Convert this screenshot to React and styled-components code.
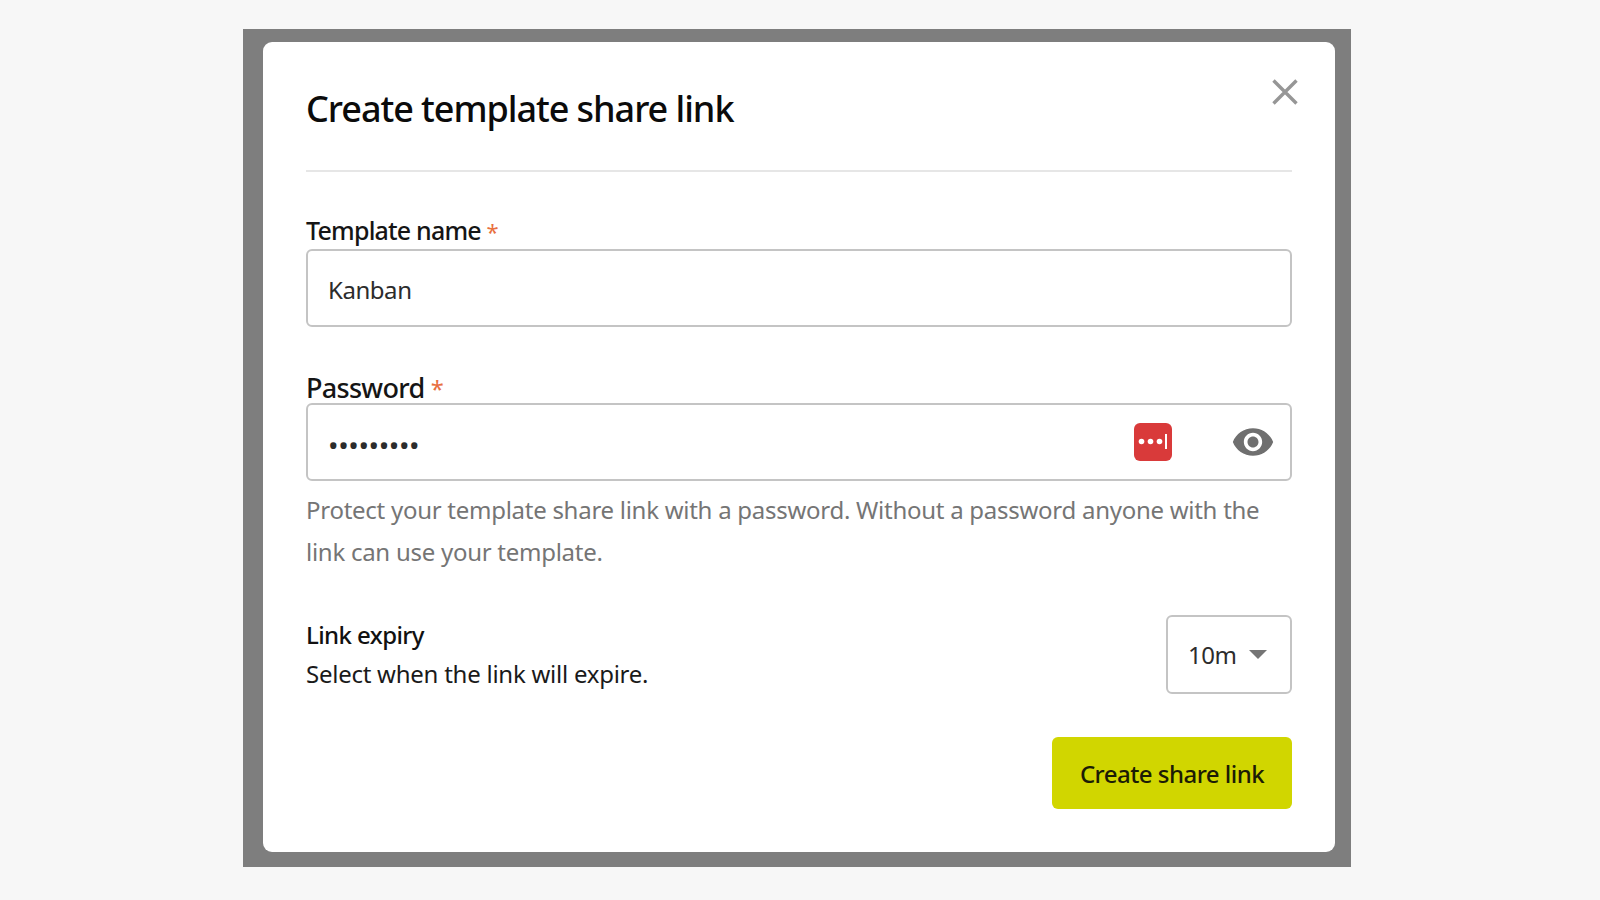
import React from "react";
import styled, { createGlobalStyle } from "styled-components";

const GlobalStyle = createGlobalStyle`
  html, body {
    margin: 0;
    padding: 0;
    background: #f7f7f7;
  }
  body {
    font-family: "Noto Sans", "Open Sans", "Liberation Sans", sans-serif;
  }
`;

const App = () => {
  return (
    <Page>
      <GlobalStyle />
      <Overlay>
        <Modal>
          <CloseButton aria-label="Close">
            <svg width="30" height="30" viewBox="0 0 30 30" fill="none">
              <path d="M3.5 3.5L26.5 26.5M26.5 3.5L3.5 26.5" stroke="#969696" strokeWidth="3.4" />
            </svg>
          </CloseButton>
          <Title>Create template share link</Title>
          <Divider />
          <Label>
            Template name <Required>*</Required>
          </Label>
          <Field>
            <Input defaultValue="Kanban" readOnly />
          </Field>
          <Label $large>
            Password <Required>*</Required>
          </Label>
          <Field>
            <Input type="password" defaultValue="password1" readOnly $dots />
            <LastPassIcon width="38" height="38" viewBox="0 0 38 38">
              <rect width="38" height="38" rx="6" fill="#d93a3a" />
              <circle cx="7.5" cy="18.5" r="2.8" fill="#fff" />
              <circle cx="16.5" cy="18.5" r="2.8" fill="#fff" />
              <circle cx="25.5" cy="18.5" r="2.8" fill="#fff" />
              <rect x="31" y="11" width="2" height="15" fill="#fff" />
            </LastPassIcon>
            <EyeIcon width="44" height="44" viewBox="0 0 24 24">
              <path
                fill="#6f6f6f"
                d="M12 4.5C7 4.5 2.73 7.61 1 12c1.73 4.39 6 7.5 11 7.5s9.27-3.11 11-7.5c-1.73-4.39-6-7.5-11-7.5zM12 17c-2.76 0-5-2.24-5-5s2.24-5 5-5 5 2.24 5 5-2.24 5-5 5zm0-8c-1.66 0-3 1.34-3 3s1.34 3 3 3 3-1.34 3-3-1.34-3-3-3z"
              />
            </EyeIcon>
          </Field>
          <HelpText>
            Protect your template share link with a password. Without a password anyone with the link can use your
            template.
          </HelpText>
          <ExpiryRow>
            <div>
              <ExpiryTitle>Link expiry</ExpiryTitle>
              <ExpiryText>Select when the link will expire.</ExpiryText>
            </div>
            <SelectBox>
              10m
              <Caret />
            </SelectBox>
          </ExpiryRow>
          <Footer>
            <SubmitButton>Create share link</SubmitButton>
          </Footer>
        </Modal>
      </Overlay>
    </Page>
  );
};

export default App;

const Page = styled.div`
  width: 1600px;
  height: 900px;
  box-sizing: border-box;
  padding: 29px 0 0 243px;
  background: #f7f7f7;
`;

const Overlay = styled.div`
  width: 1108px;
  height: 838px;
  box-sizing: border-box;
  padding: 13px 16px 15px 20px;
  background: #7e7e7e;
`;

const Modal = styled.div`
  position: relative;
  height: 810px;
  box-sizing: border-box;
  padding: 44px 43px 0 43px;
  background: #fff;
  border-radius: 9px;
`;

const CloseButton = styled.button`
  position: absolute;
  top: 35px;
  right: 35px;
  padding: 0;
  display: flex;
  border: 0;
  background: none;
`;

const Title = styled.h1`
  margin: 0;
  height: 46px;
  font-size: 36px;
  line-height: 46px;
  font-weight: 500;
  letter-spacing: -1.05px;
  color: #0b0b0b;
`;

const Divider = styled.div`
  height: 2px;
  margin: 38px 0 0;
  background: #e6e6e6;
`;

const Label = styled.label`
  display: block;
  margin-top: ${(p) => (p.$large ? "42px" : "39px")};
  height: ${(p) => (p.$large ? "34px" : "38px")};
  font-size: ${(p) => (p.$large ? "27px" : "25px")};
  line-height: 38px;
  font-weight: 500;
  letter-spacing: ${(p) => (p.$large ? "-0.7px" : "-0.8px")};
  color: #151515;
`;

const Required = styled.span`
  color: #e8703f;
  font-size: 0.88em;
  font-weight: 400;
`;

const Field = styled.div`
  display: flex;
  align-items: center;
  height: 78px;
  box-sizing: border-box;
  padding: 0 15px 0 20px;
  border: 2px solid #c4c4c4;
  border-radius: 6px;
`;

const Input = styled.input`
  flex: 1;
  min-width: 0;
  padding: ${(p) => (p.$dots ? "6px 0 0" : "2px 0 0")};
  border: 0;
  outline: 0;
  background: none;
  font-family: inherit;
  font-size: ${(p) => (p.$dots ? "28px" : "24px")};
  letter-spacing: ${(p) => (p.$dots ? "-0.4px" : "-0.45px")};
  color: #2c2c2c;
`;

const LastPassIcon = styled.svg`
  flex: none;
  margin-right: 59px;
`;

const EyeIcon = styled.svg`
  flex: none;
`;

const HelpText = styled.p`
  margin: 8px 0 0;
  font-size: 24px;
  line-height: 42px;
  letter-spacing: -0.27px;
  color: #757575;
`;

const ExpiryRow = styled.div`
  display: flex;
  justify-content: space-between;
  align-items: center;
  margin-top: 42px;
`;

const ExpiryTitle = styled.div`
  font-size: 24px;
  line-height: 39px;
  font-weight: 500;
  letter-spacing: -0.6px;
  color: #111;
`;

const ExpiryText = styled.div`
  font-size: 24px;
  line-height: 40px;
  letter-spacing: -0.25px;
  color: #1a1a1a;
`;

const SelectBox = styled.div`
  display: flex;
  align-items: center;
  justify-content: space-between;
  width: 126px;
  height: 79px;
  box-sizing: border-box;
  padding: 0 23px 0 20px;
  border: 2px solid #c4c4c4;
  border-radius: 6px;
  font-size: 24px;
  letter-spacing: -0.5px;
  color: #2c2c2c;
`;

const Caret = styled.span`
  width: 0;
  height: 0;
  border-left: 9px solid transparent;
  border-right: 9px solid transparent;
  border-top: 9px solid #757575;
`;

const Footer = styled.div`
  display: flex;
  justify-content: flex-end;
  margin-top: 43px;
`;

const SubmitButton = styled.button`
  width: 240px;
  height: 72px;
  padding: 0;
  border: 0;
  border-radius: 6px;
  background: #d1d600;
  font-family: inherit;
  font-size: 24px;
  font-weight: 500;
  letter-spacing: -0.53px;
  color: #1c1c05;
`;
